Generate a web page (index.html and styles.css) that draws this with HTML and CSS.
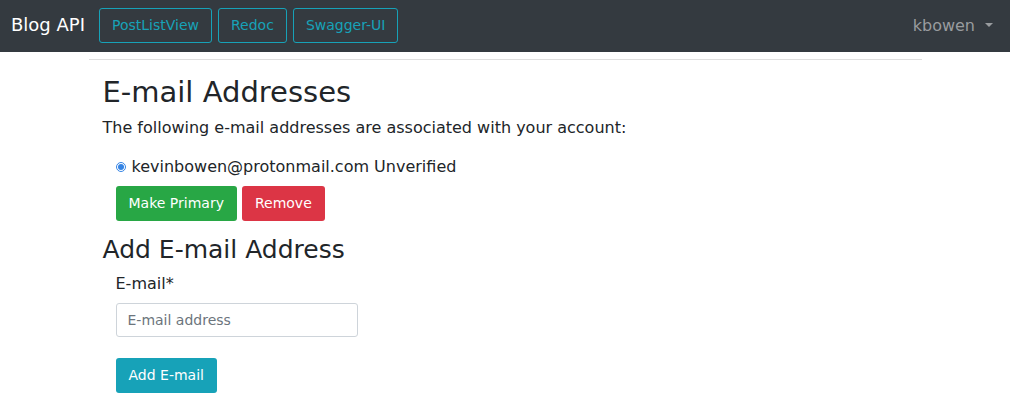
FILE: index.html
```
<!DOCTYPE html>
<html lang="en">
<head>
<meta charset="utf-8">
<title>Blog API</title>
<link rel="stylesheet" href="styles.css">
</head>
<body>
<nav class="navbar">
  <a class="brand" href="#">Blog API</a>
  <div class="nav-links">
    <a class="btn btn-outline" href="#">PostListView</a>
    <a class="btn btn-outline" href="#">Redoc</a>
    <a class="btn btn-outline" href="#">Swagger-UI</a>
  </div>
  <button class="user-menu" type="button">kbowen<span class="caret"></span></button>
</nav>
<main class="container">
  <h1 class="title">E-mail Addresses</h1>
  <p class="intro">The following e-mail addresses are associated with your account:</p>
  <form class="form address-form">
    <label class="choice"><input class="radio" type="radio" name="email" checked>kevinbowen@protonmail.com Unverified</label>
    <div class="actions">
      <button class="btn btn-success" type="button">Make Primary</button>
      <button class="btn btn-danger" type="button">Remove</button>
    </div>
  </form>
  <h2 class="subtitle">Add E-mail Address</h2>
  <form class="form">
    <label class="label" for="new-email">E-mail*</label>
    <input class="field" id="new-email" type="email" placeholder="E-mail address">
    <button class="btn btn-info" type="button">Add E-mail</button>
  </form>
</main>
</body>
</html>
```
FILE: styles.css
```
* {
  box-sizing: border-box;
}

body {
  margin: 0;
  background: #fff;
  color: #212529;
  font-family: "DejaVu Sans", sans-serif;
  font-size: 16px;
  line-height: 24px;
}

.navbar {
  display: flex;
  align-items: center;
  min-height: 52px;
  padding: 0 17px 2px 11px;
  background: #343a40;
}

.brand {
  margin-right: 14px;
  color: #fff;
  font-size: 18px;
  text-decoration: none;
}

.nav-links {
  display: flex;
  gap: 6px;
}

.btn {
  padding: 6px 12px;
  border: 1px solid transparent;
  border-radius: 3px;
  color: #fff;
  font-family: inherit;
  font-size: 14px;
  line-height: 21px;
  text-decoration: none;
}

.btn-outline {
  border-color: #17a2b8;
  color: #17a2b8;
}

.btn-success {
  background: #28a745;
}

.btn-danger {
  background: #dc3545;
}

.btn-info {
  background: #17a2b8;
}

.user-menu {
  display: flex;
  align-items: center;
  gap: 10px;
  margin-left: auto;
  padding: 0;
  border: 0;
  background: none;
  color: #999c9f;
  font-family: inherit;
  font-size: 16px;
}

.caret {
  border: 4px solid transparent;
  border-top-color: currentColor;
  border-bottom: 0;
}

.container {
  max-width: 833px;
  margin: 7px auto 0;
  padding: 14px;
  border-top: 1px solid #dfdfdf;
}

.title,
.subtitle {
  margin: 0;
  font-weight: 400;
}

.title {
  font-size: 29px;
  line-height: 36px;
}

.intro {
  margin: 6px 0 15px;
}

.subtitle {
  margin-top: 14px;
  font-size: 25px;
  line-height: 30px;
}

.form {
  display: flex;
  flex-direction: column;
  align-items: flex-start;
  padding-left: 13px;
}

.choice {
  display: flex;
  align-items: center;
  gap: 6px;
}

.radio {
  width: 10px;
  height: 10px;
  margin: 0;
  accent-color: #3584e4;
}

.actions {
  display: flex;
  gap: 5px;
  margin-top: 7px;
}

.label {
  margin: 7px 0;
}

.field {
  width: 242px;
  max-width: 100%;
  margin-bottom: 21px;
  padding: 5px 11px;
  border: 1px solid #ced4da;
  border-radius: 3px;
  font-family: inherit;
  font-size: 14px;
  line-height: 22px;
}

.field::placeholder {
  color: #6c757d;
}
```
